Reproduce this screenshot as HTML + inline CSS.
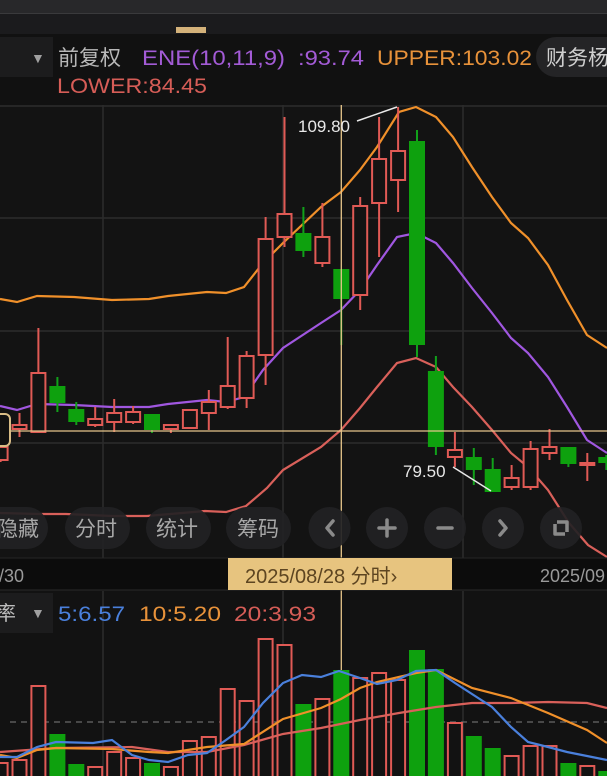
<!DOCTYPE html>
<html><head><meta charset="utf-8"><style>
html,body{margin:0;padding:0;background:#131313;width:607px;height:776px;overflow:hidden}
svg{display:block}
text{font-family:"Liberation Sans","Noto Sans CJK SC",sans-serif}
</style></head><body>
<svg width="607" height="776" viewBox="0 0 607 776" xmlns="http://www.w3.org/2000/svg">
<!-- top bars -->
<rect x="0" y="0" width="607" height="13" fill="#28282a"/>
<rect x="0" y="13" width="607" height="1" fill="#3a3a3c"/>
<rect x="0" y="14" width="607" height="20" fill="#1b1b1d"/>
<rect x="176" y="27" width="30" height="6" fill="#d4b27a"/>
<rect x="0" y="34" width="607" height="71" fill="#111111"/>
<rect x="0" y="37" width="53" height="40" fill="#1c1c1d"/>
<text x="31" y="63" fill="#a0a0a0" font-size="14">▼</text>
<text x="58" y="65" fill="#b8b8b8" font-size="21">前复权</text>
<text x="142" y="65" fill="#a35bd6" font-size="21" textLength="143" lengthAdjust="spacingAndGlyphs">ENE(10,11,9)</text>
<text x="298" y="65" fill="#a35bd6" font-size="21" textLength="66" lengthAdjust="spacingAndGlyphs">:93.74</text>
<text x="377" y="65" fill="#e8923a" font-size="21" textLength="155" lengthAdjust="spacingAndGlyphs">UPPER:103.02</text>
<rect x="536" y="37" width="90" height="40" rx="20" fill="#242426"/>
<text x="546" y="65" fill="#cfcfcf" font-size="21">财务杨</text>
<text x="57" y="93" fill="#d65d57" font-size="21" textLength="150" lengthAdjust="spacingAndGlyphs">LOWER:84.45</text>

<!-- main chart area -->
<rect x="0" y="105" width="607" height="453" fill="#131313"/>
<g stroke="#2c2c2c" stroke-width="1.5">
<line x1="0" y1="106" x2="607" y2="106"/>
<line x1="0" y1="218" x2="607" y2="218"/>
<line x1="0" y1="331" x2="607" y2="331"/>
<line x1="0" y1="443" x2="607" y2="443"/>
<line x1="103" y1="105" x2="103" y2="558"/>
<line x1="283" y1="105" x2="283" y2="558"/>
<line x1="463" y1="105" x2="463" y2="558"/>
</g>

<!-- ENE lines -->
<polyline fill="none" stroke="#f0902a" stroke-width="2.2" points="0,299 17,302 37,296 74,297 112,300 149,299 168,296 207,292 226,293 244,287 263,263 283,243 321,207 341,192 360,170 377,147 399,112 416,107 436,117 453,137 472,167 492,197 511,223 528,238 548,265 567,300 587,335 607,348"/>
<polyline fill="none" stroke="#a057e0" stroke-width="2.2" points="0,406 17,410 37,404 74,405 112,407 149,407 168,404 207,400 226,402 244,397 263,370 283,348 321,323 341,310 360,290 377,265 397,237 416,233 436,243 453,263 472,288 492,313 511,338 528,353 548,377 567,407 587,440 607,453"/>
<polyline fill="none" stroke="#d9605a" stroke-width="2.2" points="0,513 39,514 66,514 112,516 147,516 182,513 205,511 226,512 246,506 267,488 283,470 321,447 341,430 360,408 377,387 397,363 416,358 436,367 453,387 472,407 492,430 511,453 528,467 548,490 569,523 588,545 607,557"/>

<!-- candles -->
<g id="candles" stroke-width="2">
<!-- wicks -->
<g stroke="#e05a55">
<line x1="0.6" y1="445" x2="0.6" y2="462"/>
<line x1="19.5" y1="413" x2="19.5" y2="437"/>
<line x1="38.4" y1="328" x2="38.4" y2="432"/>
<line x1="95.2" y1="407" x2="95.2" y2="427"/>
<line x1="114.2" y1="399" x2="114.2" y2="432"/>
<line x1="133.1" y1="406" x2="133.1" y2="424"/>
<line x1="170.9" y1="425" x2="170.9" y2="433"/>
<line x1="189.9" y1="410" x2="189.9" y2="428"/>
<line x1="208.8" y1="390" x2="208.8" y2="430"/>
<line x1="227.7" y1="337" x2="227.7" y2="409"/>
<line x1="246.6" y1="351" x2="246.6" y2="408"/>
<line x1="265.6" y1="217" x2="265.6" y2="385"/>
<line x1="284.5" y1="117" x2="284.5" y2="247"/>
<line x1="322.4" y1="203" x2="322.4" y2="267"/>
<line x1="360.2" y1="197" x2="360.2" y2="310"/>
<line x1="379.1" y1="117" x2="379.1" y2="257"/>
<line x1="398.1" y1="107" x2="398.1" y2="212"/>
<line x1="454.9" y1="432" x2="454.9" y2="467"/>
<line x1="511.6" y1="465" x2="511.6" y2="490"/>
<line x1="530.6" y1="441" x2="530.6" y2="490"/>
<line x1="549.5" y1="429" x2="549.5" y2="460"/>
<line x1="587.3" y1="453" x2="587.3" y2="481"/>
</g>
<g stroke="#11a11a">
<line x1="57.4" y1="377" x2="57.4" y2="412"/>
<line x1="76.3" y1="402" x2="76.3" y2="425"/>
<line x1="152" y1="414" x2="152" y2="433"/>
<line x1="303.4" y1="207" x2="303.4" y2="257"/>
<line x1="341.3" y1="269" x2="341.3" y2="345"/>
<line x1="417" y1="130" x2="417" y2="357"/>
<line x1="435.9" y1="356" x2="435.9" y2="455"/>
<line x1="473.8" y1="448" x2="473.8" y2="485"/>
<line x1="492.7" y1="458" x2="492.7" y2="492"/>
<line x1="568.4" y1="447" x2="568.4" y2="467"/>
<line x1="606.3" y1="455" x2="606.3" y2="470"/>
</g>
<!-- red hollow bodies -->
<g stroke="#e05a55" fill="#131313">
<rect x="-6.4" y="447" width="14" height="13"/>
<rect x="12.5" y="425" width="14" height="4"/>
<rect x="31.4" y="373" width="14" height="59"/>
<rect x="88.2" y="419" width="14" height="6"/>
<rect x="107.2" y="413" width="14" height="9"/>
<rect x="126.1" y="412" width="14" height="10"/>
<rect x="163.9" y="425" width="14" height="4"/>
<rect x="182.9" y="410" width="14" height="18"/>
<rect x="201.8" y="402" width="14" height="11"/>
<rect x="220.7" y="386" width="14" height="21"/>
<rect x="239.6" y="356" width="14" height="42"/>
<rect x="258.6" y="239" width="14" height="116"/>
<rect x="277.5" y="214" width="14" height="23"/>
<rect x="315.4" y="237" width="14" height="26"/>
<rect x="353.2" y="206" width="14" height="89"/>
<rect x="372.1" y="159" width="14" height="44"/>
<rect x="391.1" y="151" width="14" height="29"/>
<rect x="447.9" y="450" width="14" height="7"/>
<rect x="504.6" y="478" width="14" height="9"/>
<rect x="523.6" y="449" width="14" height="38"/>
<rect x="542.5" y="447" width="14" height="6"/>
<rect x="580.3" y="463" width="14" height="2"/>
</g>
<!-- green bodies -->
<g fill="#0ea10e">
<rect x="49.4" y="386" width="16" height="17"/>
<rect x="68.3" y="409" width="16" height="13"/>
<rect x="144" y="414" width="16" height="16"/>
<rect x="295.4" y="233" width="16" height="18"/>
<rect x="333.3" y="269" width="16" height="30"/>
<rect x="409" y="141" width="16" height="204"/>
<rect x="427.9" y="371" width="16" height="76"/>
<rect x="465.8" y="457" width="16" height="13"/>
<rect x="484.7" y="469" width="16" height="23"/>
<rect x="560.4" y="447" width="16" height="17"/>
<rect x="598.3" y="457" width="16" height="6"/>
</g>
</g>

<!-- crosshair -->
<line x1="341.3" y1="105" x2="341.3" y2="776" stroke="#e6c58a" stroke-width="1.3"/>
<line x1="0" y1="431" x2="607" y2="431" stroke="#e6c58a" stroke-width="1.3"/>
<rect x="-10" y="414" width="20" height="32" rx="5" fill="#111" stroke="#d9bd86" stroke-width="2"/>

<!-- hi/lo labels -->
<text x="298" y="132" fill="#e8e8e8" font-size="17">109.80</text>
<line x1="357" y1="121" x2="397" y2="107" stroke="#e8e8e8" stroke-width="1.5"/>
<text x="403" y="477" fill="#e8e8e8" font-size="17">79.50</text>
<line x1="453" y1="467" x2="491" y2="491" stroke="#e8e8e8" stroke-width="1.5"/>

<!-- buttons -->
<g fill="#222224" fill-opacity="0.92">
<rect x="-22" y="507" width="70" height="42" rx="21"/>
<rect x="65" y="507" width="65" height="42" rx="21"/>
<rect x="146" y="507" width="65" height="42" rx="21"/>
<rect x="226" y="507" width="65" height="42" rx="21"/>
<circle cx="329.5" cy="528" r="21"/>
<circle cx="387" cy="528" r="21"/>
<circle cx="445" cy="528" r="21"/>
<circle cx="503" cy="528" r="21"/>
<circle cx="561" cy="528" r="21"/>
</g>
<g fill="#a8a8a8" font-size="21">
<text x="-3" y="536">隐藏</text>
<text x="75" y="536">分时</text>
<text x="156" y="536">统计</text>
<text x="237" y="536">筹码</text>
</g>
<g stroke="#8a8a8a" stroke-width="3.5" fill="none" stroke-linecap="round" stroke-linejoin="round">
<polyline points="333,521 327,528 333,535"/>
<line x1="379" y1="528" x2="395" y2="528"/>
<line x1="387" y1="520" x2="387" y2="536"/>
<line x1="438" y1="528" x2="452" y2="528"/>
<polyline points="500,521 506,528 500,535"/>
<polyline points="557,522 567,522 567,532" stroke-linecap="butt"/>
<polyline points="555,524 555,534 565,534" stroke-linecap="butt"/>
</g>

<!-- date axis -->
<rect x="0" y="558" width="607" height="32" fill="#0c0c0c"/>
<line x1="0" y1="558" x2="607" y2="558" stroke="#262626"/>
<line x1="0" y1="590" x2="607" y2="590" stroke="#2a2a2a"/>
<text x="-1" y="582" fill="#9a9a9a" font-size="18">/30</text>
<text x="540" y="582" fill="#9a9a9a" font-size="18">2025/09</text>
<rect x="228" y="558" width="224" height="32" fill="#e7c47f"/>
<text x="245" y="583" fill="#5d4521" font-size="20">2025/08/28 分时›</text>

<!-- lower panel -->
<rect x="0" y="591" width="607" height="185" fill="#121212"/>
<rect x="0" y="593" width="53" height="40" fill="#1c1c1d"/>
<g stroke="#2c2c2c" stroke-width="1.5">
<line x1="103" y1="591" x2="103" y2="776"/>
<line x1="283" y1="591" x2="283" y2="776"/>
<line x1="463" y1="591" x2="463" y2="776"/>
</g>
<line x1="341.3" y1="591" x2="341.3" y2="776" stroke="#e6c58a" stroke-width="1.3"/>
<text x="-4" y="620" fill="#bdbdbd" font-size="20">率</text>
<text x="31" y="618" fill="#a0a0a0" font-size="14">▼</text>
<text x="58" y="621" fill="#4a80dc" font-size="21" textLength="67" lengthAdjust="spacingAndGlyphs">5:6.57</text>
<text x="139" y="621" fill="#e8923a" font-size="21" textLength="82" lengthAdjust="spacingAndGlyphs">10:5.20</text>
<text x="234" y="621" fill="#d65d57" font-size="21" textLength="82" lengthAdjust="spacingAndGlyphs">20:3.93</text>
<line x1="10" y1="722" x2="607" y2="722" stroke="#6a6a6a" stroke-width="1.3" stroke-dasharray="6,5"/>

<!-- volume bars -->
<g stroke="#e05a55" stroke-width="2" fill="#121212">
<rect x="-6.4" y="763" width="14" height="20"/>
<rect x="12.5" y="760" width="14" height="20"/>
<rect x="31.4" y="686" width="14" height="95"/>
<rect x="88.2" y="767" width="14" height="15"/>
<rect x="107.2" y="752" width="14" height="30"/>
<rect x="126.1" y="758" width="14" height="25"/>
<rect x="163.9" y="767" width="14" height="15"/>
<rect x="182.9" y="741" width="14" height="40"/>
<rect x="201.8" y="737" width="14" height="45"/>
<rect x="220.7" y="689" width="14" height="92"/>
<rect x="239.6" y="701" width="14" height="80"/>
<rect x="258.6" y="639" width="14" height="142"/>
<rect x="277.5" y="645" width="14" height="136"/>
<rect x="315.4" y="699" width="14" height="82"/>
<rect x="353.2" y="678" width="14" height="103"/>
<rect x="372.1" y="673" width="14" height="108"/>
<rect x="391.1" y="680" width="14" height="101"/>
<rect x="447.9" y="723" width="14" height="58"/>
<rect x="504.6" y="756" width="14" height="25"/>
<rect x="523.6" y="746" width="14" height="35"/>
<rect x="542.5" y="746" width="14" height="35"/>
<rect x="580.3" y="766" width="14" height="15"/>
</g>
<g fill="#0ea10e">
<rect x="49.4" y="734" width="16" height="42"/>
<rect x="68.3" y="764" width="16" height="12"/>
<rect x="144" y="763" width="16" height="13"/>
<rect x="295.4" y="704" width="16" height="72"/>
<rect x="333.3" y="670" width="16" height="106"/>
<rect x="409" y="650" width="16" height="126"/>
<rect x="427.9" y="669" width="16" height="107"/>
<rect x="465.8" y="736" width="16" height="40"/>
<rect x="484.7" y="748" width="16" height="28"/>
<rect x="560.4" y="763" width="16" height="13"/>
<rect x="598.3" y="771" width="16" height="5"/>
</g>
<!-- volume MAs -->
<polyline fill="none" stroke="#d9605a" stroke-width="2.2" points="0,752 56,748 132,747 168,752 207,752 244,745 283,734 321,728 360,720 399,713 436,707 472,703 511,703 548,702 587,703 607,708"/>
<polyline fill="none" stroke="#f0902a" stroke-width="2.2" points="0,755 17,758 37,750 56,748 112,749 149,752 168,753 207,747 244,744 283,719 321,708 341,699 360,688 377,682 416,673 436,670 472,688 511,698 548,713 587,730 607,743"/>
<polyline fill="none" stroke="#4a80dc" stroke-width="2.2" points="0,757 17,757 37,747 56,742 93,743 112,740 132,755 149,760 168,762 188,755 207,753 226,740 244,727 263,703 283,683 302,675 321,677 339,671 360,678 377,684 397,680 416,671 436,670 455,683 492,707 511,727 528,742 548,747 567,752 587,756 607,760"/>
</svg>
</body></html>
